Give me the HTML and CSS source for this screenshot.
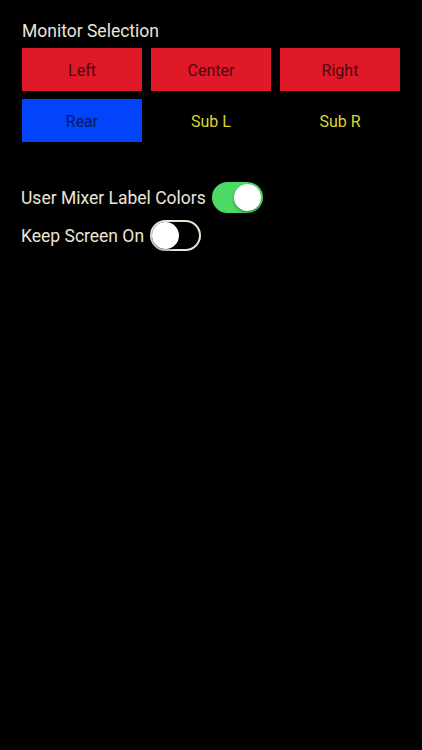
FILE: index.html
```html
<!DOCTYPE html>
<html lang="en">
<head>
    <meta charset="UTF-8">
    <title>Settings</title>
    <link rel="stylesheet" href="styles.css">
</head>
<body>

<div class="section">
    <p class="heading">Monitor Selection</p>
    <div class="monitors">
        <button class="mon red">Left</button>
        <button class="mon red">Center</button>
        <button class="mon red">Right</button>
        <button class="mon blue">Rear</button>
        <button class="mon off">Sub L</button>
        <button class="mon off">Sub R</button>
    </div>
</div>

<div class="options">
    <div class="option">
        <span>User Mixer Label Colors</span>
        <span class="switch on"><span class="knob"></span></span>
    </div>
    <div class="option">
        <span>Keep Screen On</span>
        <span class="switch"><span class="knob"></span></span>
    </div>
</div>

</body>
</html>
```

FILE: styles.css
```css
body {
    font-family: Roboto, "Liberation Sans", sans-serif;
    background: #000;
    color: #ece4d6;
    margin: 0;
    padding: 21px 22px;
}
.heading {
    font-size: 17.5px;
    margin: 0 0 6px;
    line-height: 21px;
}
.monitors {
    display: grid;
    grid-template-columns: repeat(3, 120px);
    grid-auto-rows: 43px;
    column-gap: 9px;
    row-gap: 8px;
}
.mon {
    font-family: inherit;
    font-size: 16px;
    border: none;
    padding: 1px 0 0;
    border-radius: 0;
}
.mon.red {
    background: #df1928;
    color: #4a0810;
}
.mon.blue {
    background: #0244fc;
    color: #0b1a60;
}
.mon.off {
    background: transparent;
    color: #dcd82a;
}
.options {
    margin-top: 40px;
}
.option {
    display: flex;
    align-items: center;
    gap: 6px;
    font-size: 17.5px;
    height: 31px;
    margin-bottom: 7px;
    margin-left: -1px;
}
.switch {
    width: 51px;
    height: 31px;
    box-sizing: border-box;
    border-radius: 16px;
    border: 2px solid #ece4d6;
    position: relative;
    display: inline-block;
}
.switch .knob {
    position: absolute;
    top: 0;
    left: 0;
    width: 27px;
    height: 27px;
    border-radius: 50%;
    background: #fff;
    box-shadow: 0 2px 3px rgba(0, 0, 0, 0.3);
}
.switch.on {
    background: #4cd964;
    border-color: #4cd964;
}
.switch.on .knob {
    left: 20px;
}
```
